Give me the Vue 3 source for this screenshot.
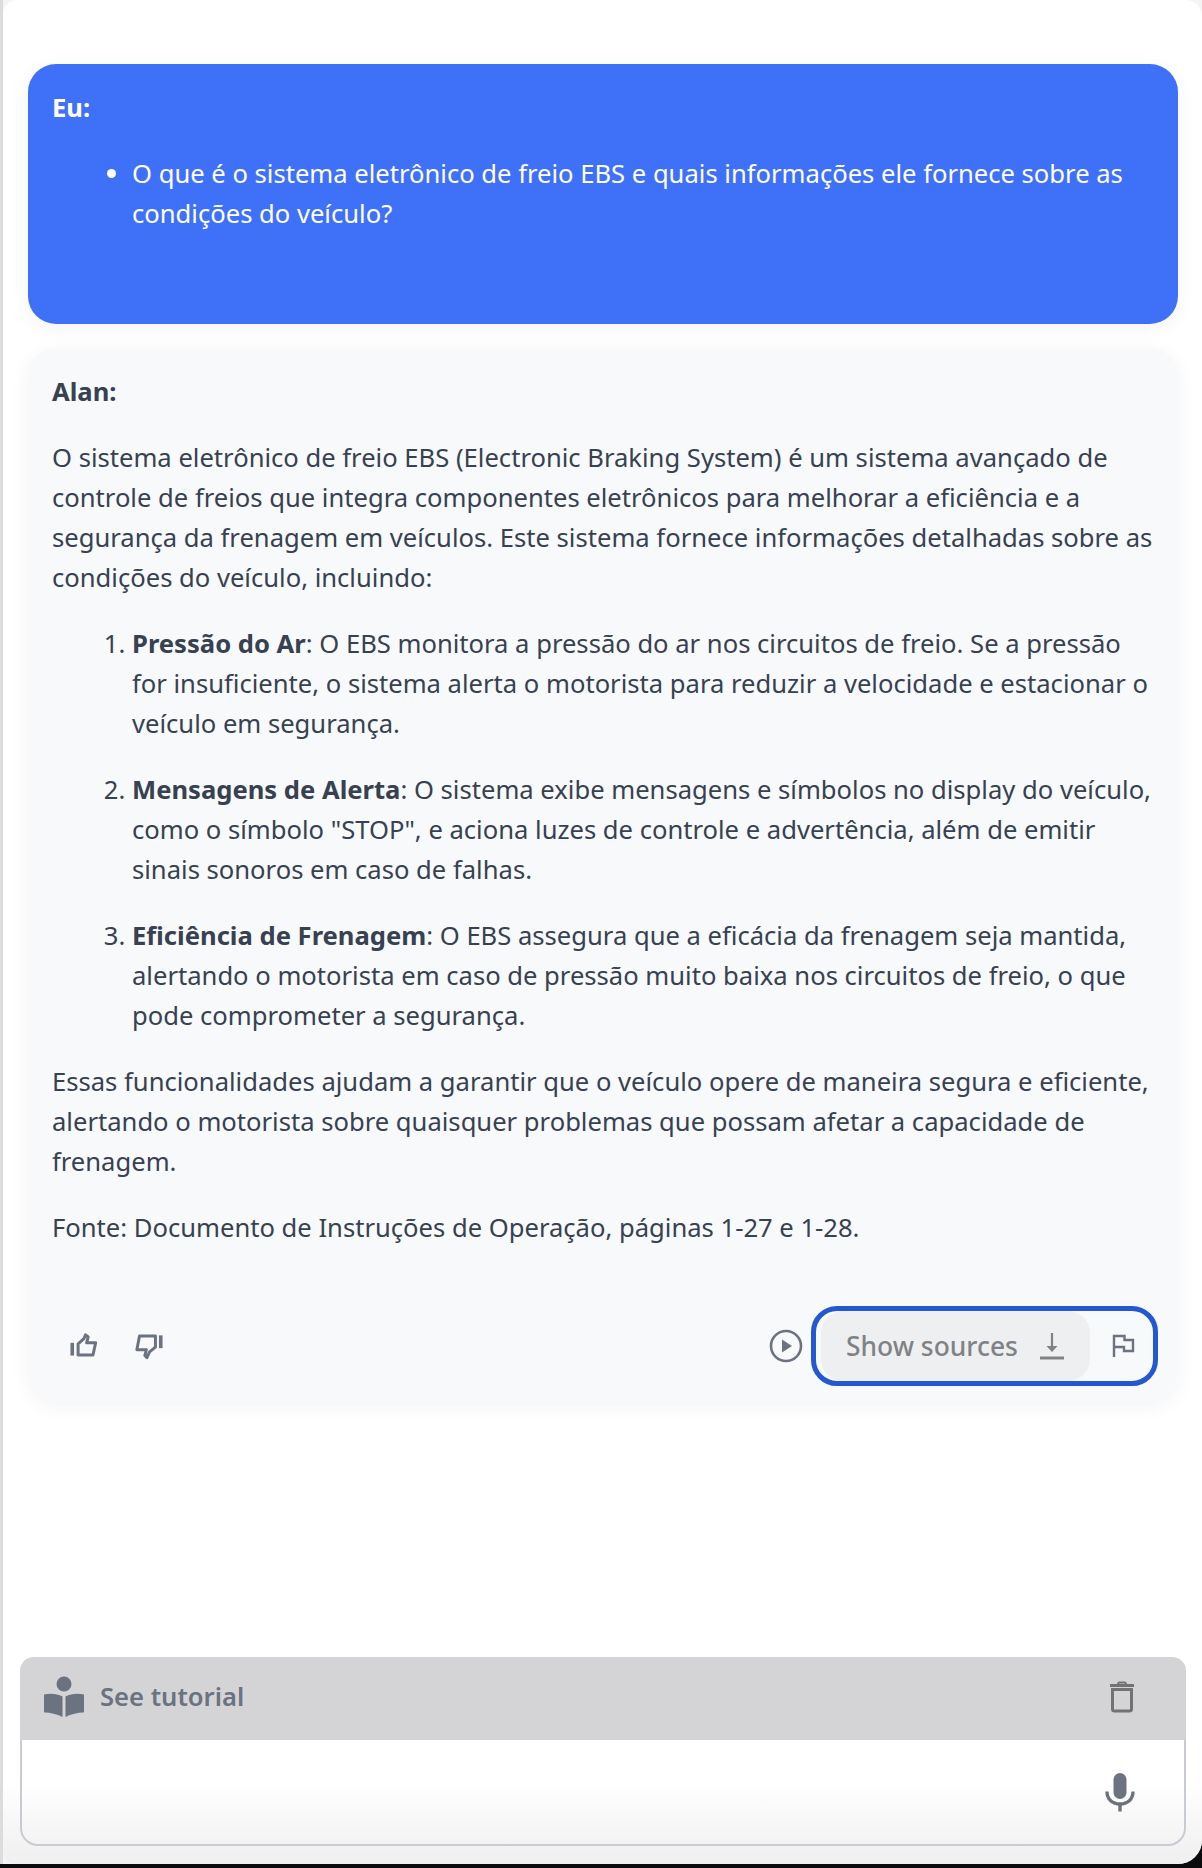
<template>
  <div class="stage">
    <div class="frame">
      <main class="window">
        <section class="bubble user">
          <p class="who">Eu:</p>
          <ul>
            <li>O que é o sistema eletrônico de freio EBS e quais informações ele fornece sobre as condições do veículo?</li>
          </ul>
        </section>

        <section class="bubble bot">
          <p class="who">Alan:</p>
          <p>O sistema eletrônico de freio EBS (Electronic Braking System) é um sistema avançado de controle de freios que integra componentes eletrônicos para melhorar a eficiência e a segurança da frenagem em veículos. Este sistema fornece informações detalhadas sobre as condições do veículo, incluindo:</p>
          <ol>
            <li v-for="item in items" :key="item.title"><strong>{{ item.title }}</strong>: {{ item.text }}</li>
          </ol>
          <p>Essas funcionalidades ajudam a garantir que o veículo opere de maneira segura e eficiente, alertando o motorista sobre quaisquer problemas que possam afetar a capacidade de frenagem.</p>
          <p>Fonte: Documento de Instruções de Operação, páginas 1-27 e 1-28.</p>

          <div class="actions">
            <div class="rate">
              <button class="icon-btn" aria-label="Like">
                <svg width="34" height="34" viewBox="0 0 32 32" fill="none" stroke="#6b7280" stroke-width="2.800" stroke-linejoin="round">
                  <path d="M4 13v12" stroke-width="3.400" />
                  <path d="M9.500 24.500V14l5.500-5 1.500-3.500 2.500 2-1.500 5.500h8.500l-2.500 11.500z" />
                </svg>
              </button>
              <button class="icon-btn" aria-label="Dislike">
                <svg width="34" height="34" viewBox="0 0 32 32" fill="none" stroke="#6b7280" stroke-width="2.800" stroke-linejoin="round">
                  <path d="M28 6v12" stroke-width="3.400" />
                  <path d="M23 6.500V17l-5.500 4.500L15 27l-2-2 1.500-5.500H5.500L8 6.500z" />
                </svg>
              </button>
            </div>
            <div class="tools">
              <button class="icon-btn play" aria-label="Play">
                <svg width="36" height="36" viewBox="0 0 36 36">
                  <circle cx="18" cy="18" r="15" fill="none" stroke="#6b7280" stroke-width="2.600" />
                  <path d="M14 11.500 24 18l-10 6.500z" fill="#6b7280" />
                </svg>
              </button>
              <div class="focus-ring">
                <button class="sources">
                  <span>Show sources</span>
                  <svg width="28" height="32" viewBox="0 0 28 32" fill="none" stroke="#808285" stroke-width="2.200">
                    <path d="M14 3v18" />
                    <path d="M8.500 16 14 22l5.500-6" fill="#808285" stroke="none" />
                    <path d="M2 28h24" stroke-width="3" />
                  </svg>
                </button>
                <button class="icon-btn flag" aria-label="Report">
                  <svg width="24" height="28" viewBox="0 0 24 28" fill="none" stroke="#6b7280" stroke-width="2.400">
                    <path d="M3 25V4h10.500v4H22v11h-9v-4H3" />
                  </svg>
                </button>
              </div>
            </div>
          </div>
        </section>

        <section class="composer">
          <div class="composer-head">
            <button class="tutorial">
              <svg width="42" height="42" viewBox="0 0 42 42" fill="#6b7280">
                <circle cx="21" cy="8" r="7.500" />
                <path d="M1 18.500c6-1.500 13-1 18.500 2V41C14 38 7 36.500 2 36.500c-.8 0-1-.5-1-1z" />
                <path d="M41 18.500c-6-1.500-13-1-18.500 2V41C28 38 35 36.500 40 36.500c.8 0 1-.5 1-1z" />
              </svg>
              <span>See tutorial</span>
            </button>
            <button class="icon-btn" aria-label="Clear">
              <svg width="26" height="32" viewBox="0 0 26 32" fill="none" stroke="#727272" stroke-width="3">
                <path d="M1 4.500h24" />
                <path d="M8.500 3.500 10 1.500h6l1.500 2" stroke-width="2" />
                <path d="M3.500 8.500v19.500q0 2 2 2h15q2 0 2-2V8.500z" />
              </svg>
            </button>
          </div>
          <div class="composer-input">
            <button class="icon-btn" aria-label="Mic">
              <svg width="30" height="40" viewBox="0 0 30 40" fill="none" stroke="#6b7280" stroke-width="3.400">
                <rect x="8.500" y="1" width="13" height="26" rx="6.500" fill="#6b7280" stroke="none" />
                <path d="M2 19.500c0 8 5.500 12.500 13 12.500s13-4.500 13-12.500" />
                <path d="M15 32v7.500" />
              </svg>
            </button>
          </div>
        </section>
      </main>
    </div>
  </div>
</template>

<script setup>
const items = [
  {
    title: 'Pressão do Ar',
    text: 'O EBS monitora a pressão do ar nos circuitos de freio. Se a pressão for insuficiente, o sistema alerta o motorista para reduzir a velocidade e estacionar o veículo em segurança.',
  },
  {
    title: 'Mensagens de Alerta',
    text: 'O sistema exibe mensagens e símbolos no display do veículo, como o símbolo "STOP", e aciona luzes de controle e advertência, além de emitir sinais sonoros em caso de falhas.',
  },
  {
    title: 'Eficiência de Frenagem',
    text: 'O EBS assegura que a eficácia da frenagem seja mantida, alertando o motorista em caso de pressão muito baixa nos circuitos de freio, o que pode comprometer a segurança.',
  },
]
</script>

<style>
html,
body {
  margin: 0;
  background: #0b0b0d;
}
</style>

<style scoped>
.stage {
  width: 1202px;
  height: 1868px;
  background: #0b0b0d;
  overflow: hidden;
  font-family: "Noto Sans", sans-serif;
  font-size: 25.6px;
  line-height: 40px;
  color: #374151;
}
.frame {
  height: 1864px;
  padding-left: 3px;
  box-sizing: border-box;
  background: linear-gradient(to right, #dcdcde 3px, #f4f4f4 3px);
  border-radius: 0 0 24px 0;
}
.window {
  height: 100%;
  box-sizing: border-box;
  display: flex;
  flex-direction: column;
  padding: 64px 24px 18px 25px;
  background: linear-gradient(#fff calc(100% - 80px), #efeff0);
  border-radius: 14px 16px 24px 12px;
}
p {
  margin: 0 0 26px;
}
.who {
  font-weight: 700;
}
.bubble {
  border-radius: 28px;
  padding: 24px;
  box-shadow: 0 4px 20px rgba(0, 0, 0, 0.05);
}
.user {
  height: 260px;
  box-sizing: border-box;
  background: #3f71f8;
  color: #fff;
}
.user ul {
  margin: 0;
  padding-left: 80px;
}
.bot {
  margin-top: 24px;
  background: #f8f9fb;
  padding-bottom: 16px;
}
ol {
  margin: 0 0 26px;
  padding-left: 80px;
}
ol li {
  margin-bottom: 26px;
}
ol li:last-child {
  margin-bottom: 0;
}
strong {
  font-weight: 700;
}
button {
  border: 0;
  padding: 0;
  background: none;
  font: inherit;
  cursor: pointer;
}
.icon-btn {
  display: flex;
  align-items: center;
  justify-content: center;
}
.actions {
  display: flex;
  justify-content: space-between;
  align-items: center;
  margin-top: 58px;
}
.rate {
  display: flex;
  gap: 29px;
  padding-left: 16px;
}
.tools {
  display: flex;
  align-items: center;
  gap: 7px;
  margin-right: -4px;
}
.focus-ring {
  display: flex;
  align-items: center;
  width: 347px;
  height: 80px;
  box-sizing: border-box;
  padding-left: 5px;
  border: 5px solid #2358d1;
  border-radius: 26px;
}
.sources {
  display: flex;
  align-items: center;
  gap: 20px;
  height: 70px;
  padding: 0 24px 0 25px;
  background: #eeeff1;
  border-radius: 22px;
  color: #808285;
  font-weight: 500;
  font-size: 26.4px;
}
.flag {
  margin-left: 21px;
}
.composer {
  margin-top: auto;
  margin-left: -8px;
  margin-right: -8px;
}
.composer-head {
  display: flex;
  justify-content: space-between;
  align-items: center;
  height: 83px;
  box-sizing: border-box;
  padding: 0 51px 3px 23px;
  background: #d4d4d6;
  border-radius: 14px 14px 0 0;
}
.tutorial {
  display: flex;
  align-items: center;
  gap: 15px;
  color: #6b7280;
  font-weight: 600;
}
.composer-input {
  display: flex;
  justify-content: flex-end;
  align-items: center;
  height: 106px;
  box-sizing: border-box;
  padding: 0 49px 0 0;
  border: 2px solid #c8ccd2;
  border-top: 0;
  border-radius: 0 0 18px 18px;
}
</style>
